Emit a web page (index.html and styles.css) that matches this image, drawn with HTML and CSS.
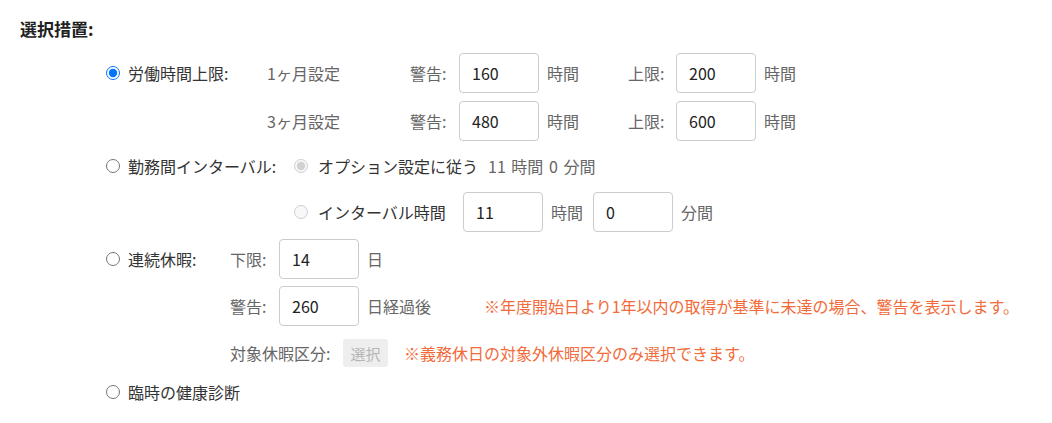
FILE: index.html
```html
<!DOCTYPE html>
<html lang="ja">
<head>
<meta charset="utf-8">
<link rel="stylesheet" href="styles.css">
</head>
<body>
<div class="page">
  <div class="title">選択措置:</div>

  <div class="group g1">
    <div class="head">
      <input type="radio" name="m" class="radio" checked>
      <span class="lbl">労働時間上限:</span>
    </div>
    <div class="rows">
      <div class="row">
        <span class="c-period sub">1ヶ月設定</span>
        <span class="c-key sub">警告:</span>
        <input class="box" type="text" value="160">
        <span class="c-unit sub">時間</span>
        <span class="c-key2 sub">上限:</span>
        <input class="box" type="text" value="200">
        <span class="c-unit2 sub">時間</span>
      </div>
      <div class="row">
        <span class="c-period sub">3ヶ月設定</span>
        <span class="c-key sub">警告:</span>
        <input class="box" type="text" value="480">
        <span class="c-unit sub">時間</span>
        <span class="c-key2 sub">上限:</span>
        <input class="box" type="text" value="600">
        <span class="c-unit2 sub">時間</span>
      </div>
    </div>
  </div>

  <div class="group g2">
    <div class="head">
      <input type="radio" name="m" class="radio">
      <span class="lbl">勤務間インターバル:</span>
    </div>
    <div class="rows">
      <div class="row">
        <input type="radio" name="i" class="radio sr" checked disabled>
        <span class="c-opt lbl">オプション設定に従う</span>
        <span class="sub spaced">11 時間 0 分間</span>
      </div>
      <div class="row">
        <input type="radio" name="i" class="radio sr" disabled>
        <span class="c-int lbl">インターバル時間</span>
        <input class="box" type="text" value="11">
        <span class="c-hour sub">時間</span>
        <input class="box" type="text" value="0">
        <span class="c-unit2 sub">分間</span>
      </div>
    </div>
  </div>

  <div class="group g3">
    <div class="head">
      <input type="radio" name="m" class="radio">
      <span class="lbl">連続休暇:</span>
    </div>
    <div class="rows">
      <div class="row">
        <span class="c-key sub">下限:</span>
        <input class="box" type="text" value="14">
        <span class="c-unit2 sub">日</span>
      </div>
      <div class="row">
        <span class="c-key sub">警告:</span>
        <input class="box" type="text" value="260">
        <span class="c-days sub">日経過後</span>
        <span class="note">※年度開始日より1年以内の取得が基準に未達の場合、警告を表示します。</span>
      </div>
      <div class="row">
        <span class="c-cat sub">対象休暇区分:</span>
        <button class="pick" type="button" disabled>選択</button>
        <span class="note n2">※義務休日の対象外休暇区分のみ選択できます。</span>
      </div>
    </div>
  </div>

  <div class="group g4">
    <div class="head">
      <input type="radio" name="m" class="radio">
      <span class="lbl">臨時の健康診断</span>
    </div>
  </div>
</div>
</body>
</html>
```

FILE: styles.css
```css
* { box-sizing: border-box; }
html, body { margin: 0; padding: 0; background: #fff; }
body {
  font-family: "Noto Sans CJK JP", "Noto Sans", sans-serif;
  font-size: 16px;
  color: #333;
}
.page { padding: 19px 0 0 20px; }
.title {
  font-weight: bold;
  font-size: 17px;
  line-height: 20px;
  color: #222;
}
.group {
  display: flex;
  align-items: flex-start;
  padding-left: 86px;
}
.g1 { margin-top: 14px; }
.g2 { margin-top: 5px; }
.g3 { margin-top: 7px; }
.g4 { margin-top: 0; }
.head {
  display: flex;
  align-items: center;
  height: 40px;
}
.g1 .head { width: 161px; }
.g2 .head { width: 188px; }
.g3 .head { width: 124px; }
.g4 .head { height: 38px; }
.radio {
  margin: 0 8px 0 0;
  width: 14px;
  height: 14px;
  flex: none;
}
.sr { margin-right: 10px; }
.lbl { color: #333; white-space: nowrap; }
.sub { color: #666; white-space: nowrap; }
.spaced { word-spacing: 2px; }
.rows { display: flex; flex-direction: column; }
.g1 .rows { gap: 8px; }
.g2 .rows { gap: 6px; }
.g3 .rows { gap: 7px; }
.row {
  display: flex;
  align-items: center;
  height: 40px;
}
.c-period { width: 143px; }
.c-key { width: 49px; }
.c-key2 { width: 48px; }
.c-unit { width: 89px; padding-left: 8px; }
.c-unit2 { padding-left: 8px; }
.c-hour { width: 50px; padding-left: 8px; }
.c-opt { width: 170px; }
.c-int { width: 145px; }
.c-days { width: 125px; padding-left: 8px; }
.c-cat { width: 113px; }
.box {
  width: 80px;
  height: 40px;
  border: 1px solid #ccc;
  border-radius: 4px;
  padding: 0 0 0 12px;
  font: inherit;
  color: #222;
  background: #fff;
  outline: none;
}
.pick {
  width: 45px;
  height: 28px;
  border: none;
  border-radius: 3px;
  background: #eee;
  color: #b5b5b5;
  font: inherit;
  font-size: 15px;
  padding: 0;
}
.note { color: #f26b3a; white-space: nowrap; }
.n2 { margin-left: 16px; }
```
